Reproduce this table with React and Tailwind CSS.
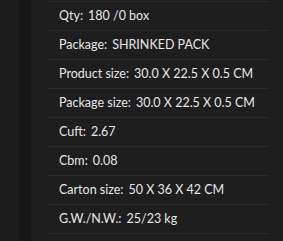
export default function App() {
  const rows = [
    ['Qty:', '180 /0 box'],
    ['Package:', 'SHRINKED PACK'],
    ['Product size:', '30.0 X 22.5 X 0.5 CM'],
    ['Package size:', '30.0 X 22.5 X 0.5 CM'],
    ['Cuft:', '2.67'],
    ['Cbm:', '0.08'],
    ['Carton size:', '50 X 36 X 42 CM'],
    ['G.W./N.W.:', '25/23 kg'],
  ];

  return (
    <div className="flex h-[241px] w-[283px] overflow-hidden bg-[#1e1e1e]" style={{ fontFamily: 'Lato, "Liberation Sans", sans-serif' }}>
      <div className="w-[19px] shrink-0 bg-[#1c1c1c]" />
      <div className="w-[12px] shrink-0 bg-[#161616]" />
      <div className="flex-1 pl-[18px] pr-[15px]">
        <div className="mt-[1px] border-t border-dotted border-[#3a3a3a]">
          {rows.map(([label, value]) => (
            <div key={label} className="flex h-[29px] items-center whitespace-nowrap border-b border-dotted border-[#3a3a3a] pl-[10px] text-[12.5px] text-[#e6e6e6]">
              <span>{label}</span>
              <span className="ml-[5px]">{value}</span>
            </div>
          ))}
        </div>
      </div>
    </div>
  );
}
